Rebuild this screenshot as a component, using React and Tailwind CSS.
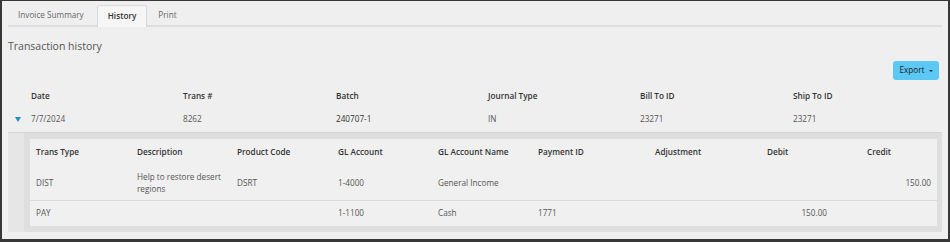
const font = { fontFamily: '"Open Sans", "Liberation Sans", sans-serif' };

const summaryCols = ['Date', 'Trans #', 'Batch', 'Journal Type', 'Bill To ID', 'Ship To ID'];
const summaryRow = ['7/7/2024', '8262', '240707-1', 'IN', '23271', '23271'];

const detailCols = [
  'Trans Type',
  'Description',
  'Product Code',
  'GL Account',
  'GL Account Name',
  'Payment ID',
  'Adjustment',
  'Debit',
  'Credit',
];

const detailRows = [
  {
    type: 'DIST',
    desc: ['Help to restore desert', 'regions'],
    product: 'DSRT',
    gl: '1-4000',
    glName: 'General Income',
    payment: '',
    adjustment: '',
    debit: '',
    credit: '150.00',
  },
  {
    type: 'PAY',
    desc: [],
    product: '',
    gl: '1-1100',
    glName: 'Cash',
    payment: '1771',
    adjustment: '',
    debit: '150.00',
    credit: '',
  },
];

const detailGrid = 'grid grid-cols-[101px_100px_101px_100px_100px_117px_112px_100px_1fr]';
const summaryGrid = 'grid grid-cols-[23px_152px_153px_152px_152px_153px_1fr]';

function Tabs() {
  return (
    <div className="mx-[6px] mt-[4px] flex h-[22px] items-stretch border-b-2 border-[#dedede] text-[8.2px] text-[#666]">
      <div className="flex items-center pl-[10px] pr-[13px]">Invoice Summary</div>
      <div className="-mb-[2px] flex items-center rounded-t-[2px] border border-b-0 border-[#d8d8d8] bg-[#f6f6f6] px-[10px] font-semibold text-[#333]">
        History
      </div>
      <div className="flex items-center pl-[11px]">Print</div>
    </div>
  );
}

function SummaryTable() {
  return (
    <div className="mx-[6px] text-[8.2px]">
      <div className={`${summaryGrid} h-[22px] items-center font-semibold text-[#333]`}>
        <div />
        {summaryCols.map((c) => (
          <div key={c}>{c}</div>
        ))}
      </div>
      <div className={`${summaryGrid} h-[26px] items-center border-b border-[#d6d6d6] text-[#555]`}>
        <div className="flex justify-center pr-[3px]">
          <svg width="6" height="5" viewBox="0 0 6 5">
            <path d="M0 0 L6 0 L3 5 Z" fill="#1b8fd2" />
          </svg>
        </div>
        {summaryRow.map((v, i) => (
          <div key={i} className={i === 2 ? 'text-[#333]' : ''}>
            {v}
          </div>
        ))}
      </div>
    </div>
  );
}

function DetailTable() {
  return (
    <div className="mx-[6px] flex h-[99px] bg-[#dedede]">
      <div className="w-[16px] bg-[#e6e6e6]" />
      <div className="flex-1 pb-[6px] pl-[6px] pr-[5px] pt-[6px]">
        <div className="bg-[#f0f0f0] text-[8.2px]">
          <div className={`${detailGrid} h-[27px] items-center font-semibold text-[#333]`}>
            {detailCols.map((c) => (
              <div key={c} className="pl-[6px]">
                {c}
              </div>
            ))}
          </div>
          {detailRows.map((r, idx) => (
            <div
              key={idx}
              className={`${detailGrid} items-center text-[#555] ${
                idx === 0 ? 'h-[35px] border-b border-[#dadada]' : 'h-[25px]'
              }`}
            >
              <div className="pl-[6px]">{r.type}</div>
              <div className="pl-[6px] leading-[12px]">
                {r.desc.map((d) => (
                  <div key={d} className="whitespace-nowrap">
                    {d}
                  </div>
                ))}
              </div>
              <div className="pl-[6px]">{r.product}</div>
              <div className="pl-[6px]">{r.gl}</div>
              <div className="pl-[6px]">{r.glName}</div>
              <div className="pl-[6px]">{r.payment}</div>
              <div className="pl-[6px]">{r.adjustment}</div>
              <div className="pr-[34px] text-right">{r.debit}</div>
              <div className="pr-[6px] text-right">{r.credit}</div>
            </div>
          ))}
        </div>
      </div>
    </div>
  );
}

export default function App() {
  return (
    <div
      style={font}
      className="h-[242px] w-[950px] overflow-hidden border-x-2 border-b-[3px] border-t border-[#383838] bg-[#efefef]"
    >
      <Tabs />
      <div className="ml-[6px] mt-[12px] text-[10.5px] leading-[14px] text-[#555]">Transaction history</div>
      <div className="mr-[9px] mt-[8px] flex justify-end">
        <button className="flex h-[19px] w-[46px] items-center justify-center gap-[4px] rounded-[3px] bg-[#5bc8f5] text-[8.2px] text-[#222]">
          Export
          <svg width="4" height="2" viewBox="0 0 4 2">
            <path d="M0 0 L4 0 L2 2 Z" fill="#222" />
          </svg>
        </button>
      </div>
      <div className="mt-[5px]">
        <SummaryTable />
      </div>
      <DetailTable />
    </div>
  );
}
